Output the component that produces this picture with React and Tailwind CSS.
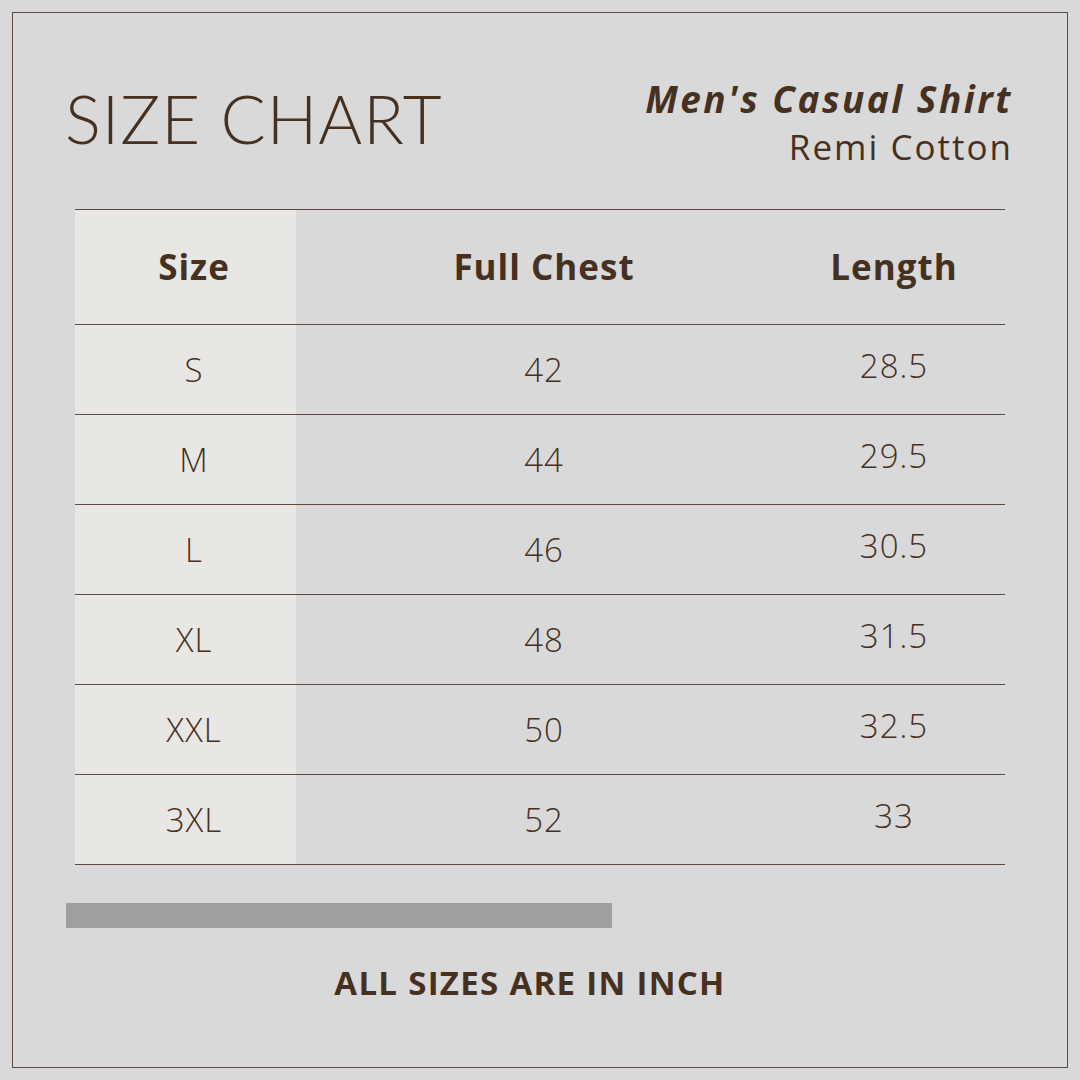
const rows = [
  ['S', '42', '28.5'],
  ['M', '44', '29.5'],
  ['L', '46', '30.5'],
  ['XL', '48', '31.5'],
  ['XXL', '50', '32.5'],
  ['3XL', '52', '33'],
];

export default function App() {
  return (
    <div className="w-[1080px] h-[1080px] bg-[#d9d9d9] p-3 text-[#46301f] font-['Open_Sans',sans-serif]">
      <div className="h-full border border-[#5b4b40] flex flex-col">
        <Header />
        <SizeTable />
        <div className="ml-[53px] mt-[38px] w-[546px] h-[25px] bg-[#9f9f9f]" />
        <div className="mt-[38px] pr-5 text-center text-[33px] font-bold leading-none tracking-[1.3px]">
          ALL SIZES ARE IN INCH
        </div>
      </div>
    </div>
  );
}

function Header() {
  return (
    <div className="flex justify-between items-start pl-[52px] pr-[54px] pt-[72px]">
      <h1 className="font-['Lato',sans-serif] font-light text-[67px] leading-none tracking-[1px]">
        SIZE CHART
      </h1>
      <div className="flex flex-col items-end -mt-[5px]">
        <span className="text-[37px] font-bold italic leading-none tracking-[2.5px]">
          Men's Casual Shirt
        </span>
        <span className="mt-[12px] text-[35px] leading-none tracking-[2px]">
          Remi Cotton
        </span>
      </div>
    </div>
  );
}

function SizeTable() {
  return (
    <div className="ml-[62px] mt-[45px] w-[930px] border-t border-[#5b4b40]">
      <div className="grid grid-cols-[238px_462px_230px] h-[115px] items-center border-b border-[#5b4b40] bg-[linear-gradient(to_right,#e8e7e3_221px,transparent_221px)] text-[35px] font-bold tracking-[1px]">
        <div className="text-center">Size</div>
        <div className="text-center">Full Chest</div>
        <div className="text-center pl-2">Length</div>
      </div>
      {rows.map(([size, chest, length]) => (
        <div
          key={size}
          className="grid grid-cols-[238px_462px_230px] h-[90px] items-center border-b border-[#5b4b40] bg-[linear-gradient(to_right,#e8e7e3_221px,transparent_221px)] text-[33px] font-light tracking-[1px]"
        >
          <div className="text-center">{size}</div>
          <div className="text-center">{chest}</div>
          <div className="text-center pl-2 -mt-2">{length}</div>
        </div>
      ))}
    </div>
  );
}
